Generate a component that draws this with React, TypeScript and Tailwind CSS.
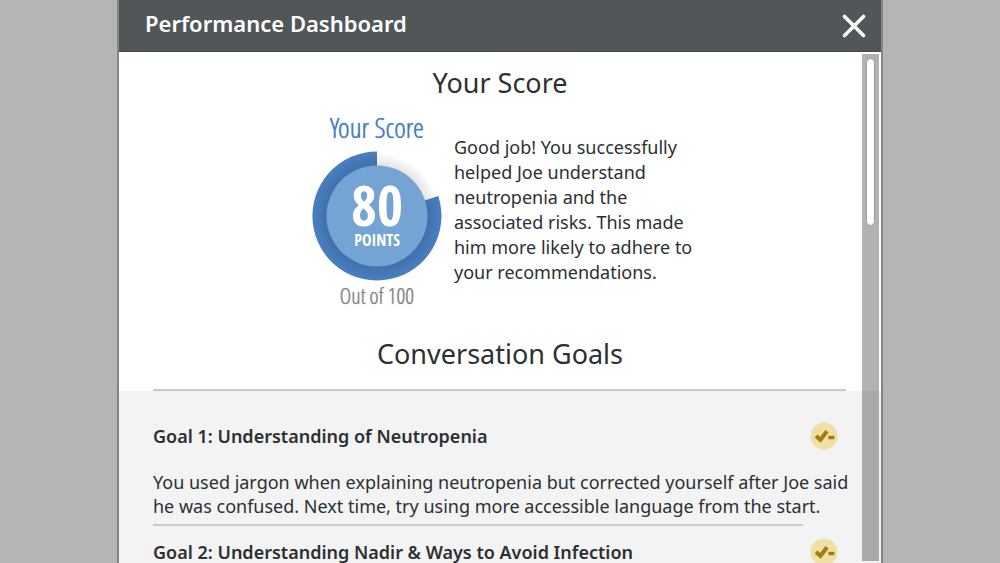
import React from 'react';

interface Goal {
  id: number;
  title: string;
  feedback: string;
}

const score = 80;

const goals: Goal[] = [
  {
    id: 1,
    title: 'Understanding of Neutropenia',
    feedback:
      'You used jargon when explaining neutropenia but corrected yourself after Joe said he was confused. Next time, try using more accessible language from the start.',
  },
  {
    id: 2,
    title: 'Understanding Nadir & Ways to Avoid Infection',
    feedback: '',
  },
];

const PartialIcon: React.FC = () => (
  <svg viewBox="0 0 28 28" className="h-7 w-7 flex-shrink-0" role="img" aria-label="Partially met">
    <circle cx="14" cy="14" r="13.6" fill="#efe1a6" />
    <path d="M6 14 L10.4 17.8 L17 9.2" fill="none" stroke="#a67a0b" strokeWidth="4" />
    <rect x="18.4" y="13.8" width="6" height="3.4" fill="#a67a0b" />
  </svg>
);

const ScoreDial: React.FC<{ score: number }> = ({ score }) => (
  <div className="grid h-[130px] w-[130px] place-items-center">
    <svg viewBox="0 0 130 130" className="col-start-1 row-start-1 h-full w-full" aria-hidden="true">
      <defs>
        <radialGradient id="dial-shade" cx="65" cy="65" r="64.5" gradientUnits="userSpaceOnUse">
          <stop offset="0.76" stopColor="#000" stopOpacity="0.12" />
          <stop offset="0.98" stopColor="#000" stopOpacity="0" />
        </radialGradient>
      </defs>
      <path d="M65 65 L65 0.5 A64.5 64.5 0 1 0 126.3 45.1 Z" fill="#487ec0" />
      <circle cx="65" cy="65" r="64.5" fill="url(#dial-shade)" />
      <circle cx="65" cy="65" r="50.5" fill="#75a4d4" />
    </svg>
    <div className="col-start-1 row-start-1 pb-1 text-center font-['Open_Sans_Condensed','Roboto',sans-serif] font-bold text-white">
      <p className="text-[56px] leading-[52px]">{score}</p>
      <p className="text-[16px] leading-5">POINTS</p>
    </div>
  </div>
);

const GoalItem: React.FC<{ goal: Goal }> = ({ goal }) => (
  <li>
    <div className="flex items-center justify-between pr-6">
      <h3 className="text-[18px] leading-7 font-semibold">
        Goal {goal.id}: {goal.title}
      </h3>
      <PartialIcon />
    </div>
    {goal.feedback && (
      <>
        <p className="mt-5 text-[18px] leading-6">{goal.feedback}</p>
        <hr className="mt-1.5 mr-[59px] border-t-2 border-[#cbcbcb]" />
      </>
    )}
  </li>
);

const App: React.FC = () => {
  return (
    <main className="h-screen overflow-hidden bg-[#b5b5b5] font-['Noto_Sans',sans-serif] text-[#2c3033]">
      <div
        role="dialog"
        aria-labelledby="dashboard-title"
        className="mx-auto flex h-full max-w-[766px] flex-col border-x-2 border-[#858585] bg-white"
      >
        <header className="flex h-[52px] items-center justify-between border-b border-[#44494c] bg-[#515659] pr-3.5 pl-[26px] text-white">
          <h1 id="dashboard-title" className="pb-1 text-[22px] font-semibold">
            Performance Dashboard
          </h1>
          <button type="button" aria-label="Close">
            <svg viewBox="0 0 26 26" className="h-[26px] w-[26px]">
              <path d="M3.5 3.5 L22.5 22.5 M22.5 3.5 L3.5 22.5" stroke="#fff" strokeWidth="3.6" strokeLinecap="round" />
            </svg>
          </button>
        </header>

        <div id="dashboard-content" className="relative min-h-0 flex-1 overflow-hidden">
          <section className="pt-[13px]">
            <h2 className="text-center text-[27px] leading-9">Your Score</h2>
            <div className="mt-2.5 flex items-center justify-center pl-[5px]">
              <div className="flex flex-col items-center">
                <p className="font-['Open_Sans_Condensed_Light','Open_Sans_Condensed','Roboto',sans-serif] text-[28px] leading-8 font-light text-[#467cbd] [text-shadow:0_0_1px_currentColor]">
                  Your Score
                </p>
                <div className="mt-2">
                  <ScoreDial score={score} />
                </div>
                <p className="font-['Open_Sans_Condensed_Light','Open_Sans_Condensed','Roboto',sans-serif] text-[22px] leading-7 font-light text-[#83878a] [text-shadow:0_0_1px_currentColor]">
                  Out of 100
                </p>
              </div>
              <p className="ml-3 w-[239px] text-[18px] leading-[25px]">
                Good job! You successfully helped Joe understand neutropenia and the associated risks. This made him more
                likely to adhere to your recommendations.
              </p>
            </div>
          </section>

          <section className="mt-[27px]">
            <h2 className="text-center text-[27px] leading-9">Conversation Goals</h2>
            <hr className="mt-[17px] mr-[35px] ml-[34px] border-t-2 border-[#cbcbcb]" />
            <ul className="flex flex-col gap-3 bg-[#f3f3f3] pt-[31px] pr-[19px] pl-[34px]">
              {goals.map((goal) => (
                <GoalItem key={goal.id} goal={goal} />
              ))}
            </ul>
          </section>

          <div
            role="scrollbar"
            aria-label="Scroll dashboard"
            aria-controls="dashboard-content"
            aria-valuenow={0}
            className="absolute top-0.5 right-0.5 bottom-0.5 w-[17px] bg-black/30 pt-1"
          >
            <div className="mx-auto h-[168px] w-[9px] rounded-full border border-[#999] bg-white" />
          </div>
        </div>
      </div>
    </main>
  );
};

export default App;
